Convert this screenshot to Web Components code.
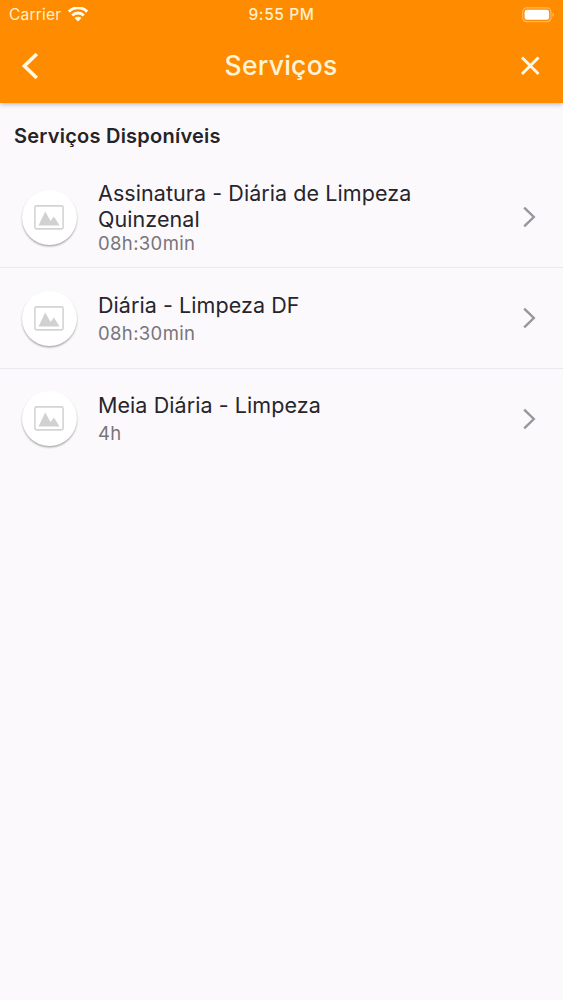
<!DOCTYPE html>
<html lang="pt-BR">
<head>
<meta charset="utf-8">
<title>Serviços</title>
<style>
html,body{margin:0;height:100%;background:#fcf9fd}
body{font-family:Inter,"Liberation Sans",sans-serif;overflow:hidden}
</style>
</head>
<body>
<services-page></services-page>
<script>
class StatusBar extends HTMLElement {
  constructor() {
    super();
    this.attachShadow({mode: 'open'}).innerHTML = `
<style>
:host{display:grid;grid-template-columns:1fr auto 1fr;align-items:center;height:28px;padding:0 9px 0 9px;color:#fff1cf;font-size:15.5px;line-height:28px}
.left{display:flex;align-items:center;gap:7px}
.carrier{letter-spacing:.2px;line-height:29px}
.time{font-weight:500;letter-spacing:.6px;line-height:29px}
svg{display:block}
.battery{justify-self:end}
</style>
<div class="left"><span class="carrier">Carrier</span>
<svg width="20" height="15" viewBox="0 0 20 15"><g fill="none" stroke="#fffbea" stroke-width="2.9"><path d="M.9 4.6A13 13 0 0 1 19.1 4.6"/><path d="M4.2 8.4A8.2 8.2 0 0 1 15.8 8.4"/></g><path d="M6.5 11.1A5 5 0 0 1 13.5 11.1L10 14.5Z" fill="#fffbea"/></svg></div>
<span class="time">9:55 PM</span>
<svg class="battery" width="32" height="16" viewBox="0 0 32 16"><rect x=".7" y=".9" width="28.2" height="13.8" rx="4" fill="none" stroke="#ffb95a" stroke-width="1.2"/><rect x="2.6" y="2.8" width="24.5" height="10" rx="2.3" fill="#fff"/><path d="M30.5 5.8q1.4.5 1.4 2t-1.4 2z" fill="#ffc36d"/></svg>`;
  }
}
customElements.define('status-bar', StatusBar);

class NavBar extends HTMLElement {
  constructor() {
    super();
    this.attachShadow({mode: 'open'}).innerHTML = `
<style>
:host{display:grid;grid-template-columns:1fr auto 1fr;align-items:center;height:75px;padding:0 22px 0 21px;color:#fff4d6}
h1{margin:0;padding-bottom:2px;font-size:26.5px;font-weight:500;line-height:34px;letter-spacing:.25px}
svg{display:block}
.close{justify-self:end}
</style>
<svg width="18" height="28" viewBox="0 0 18 28"><path d="M15.8 2 3.4 14 15.8 26" fill="none" stroke="#fff8e4" stroke-width="3.6"/></svg>
<h1><slot></slot></h1>
<svg class="close" width="20" height="20" viewBox="0 0 20 20"><path d="M1 1.5 17.5 18M17.5 1.5 1 18" fill="none" stroke="#fff8e4" stroke-width="2.9"/></svg>`;
  }
}
customElements.define('nav-bar', NavBar);

class ServiceAvatar extends HTMLElement {
  constructor() {
    super();
    this.attachShadow({mode: 'open'}).innerHTML = `
<style>
:host{display:flex;align-items:center;justify-content:center;width:55px;height:55px;border-radius:50%;background:#fff;box-shadow:0 1.5px 2px rgba(0,0,0,.32)}
svg{display:block}
</style>
<svg width="30" height="25" viewBox="0 0 30 25"><rect x=".9" y=".9" width="28.2" height="23" rx="1.6" fill="none" stroke="#d4d4d4" stroke-width="1.6"/><path d="M4.5 20.4 11.2 6.6 16.6 16 19.9 11.4 25.6 20.4Z" fill="#d1d1d1"/></svg>`;
  }
}
customElements.define('service-avatar', ServiceAvatar);

class ServiceRow extends HTMLElement {
  constructor() {
    super();
    this.attachShadow({mode: 'open'}).innerHTML = `
<style>
:host{display:flex;align-items:center;box-sizing:border-box;height:var(--row-height,101px);padding:0 27.5px 0 21.5px;border-bottom:1px solid #ebe8ed}
:host(:last-of-type){height:100px;border-color:transparent}
.text{flex:1;margin-left:21.5px;padding:0 70px var(--text-lift,1px) 0}
.name{font-size:21.5px;line-height:26px;color:#27252a;letter-spacing:.07px}
.time{margin-top:var(--time-gap,4px);font-size:18.5px;line-height:22px;color:#77757a;letter-spacing:.36px}
svg{display:block}
</style>
<service-avatar></service-avatar>
<div class="text"><div class="name"><slot></slot></div><div class="time"><slot name="time"></slot></div></div>
<svg width="13" height="22" viewBox="0 0 13 22"><path d="M1.2 1.6 10.8 11 1.2 20.4" fill="none" stroke="#98969a" stroke-width="2.4"/></svg>`;
  }
}
customElements.define('service-row', ServiceRow);

class ServicesPage extends HTMLElement {
  constructor() {
    super();
    this.attachShadow({mode: 'open'}).innerHTML = `
<style>
:host{display:block;height:100vh;background:#fcf9fd}
header{background:#ff8b00;box-shadow:0 1px 5px rgba(60,70,100,.42)}
h2{margin:0;padding:20px 14px 0;height:44px;font-size:20px;line-height:27px;font-weight:600;color:#252328;letter-spacing:.23px}
.tall{--time-gap:0px;--text-lift:0px}
</style>
<header><status-bar></status-bar><nav-bar>Serviços</nav-bar></header>
<main><h2>Serviços Disponíveis</h2>
<service-row class="tall">Assinatura - Diária de Limpeza Quinzenal<span slot="time">08h:30min</span></service-row>
<service-row>Diária - Limpeza DF<span slot="time">08h:30min</span></service-row>
<service-row>Meia Diária - Limpeza<span slot="time">4h</span></service-row></main>`;
  }
}
customElements.define('services-page', ServicesPage);
</script>
</body>
</html>
